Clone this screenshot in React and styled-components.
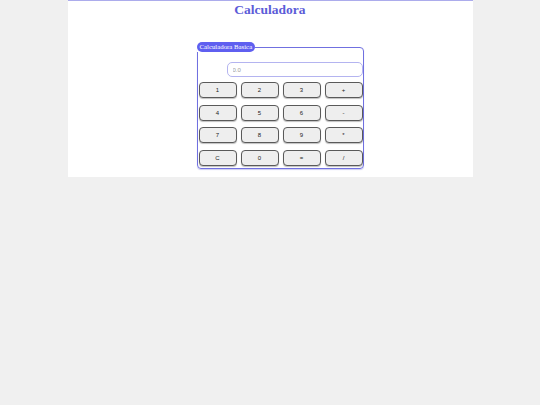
import styled, { createGlobalStyle } from "styled-components";

const GlobalStyle = createGlobalStyle`
  html, body {
    margin: 0;
    padding: 0;
    background: #f0f0f0;
  }
`;

const Container = styled.div`
  width: 75%;
  height: 177px;
  margin: 0 auto;
  background: white;
  border-top: 1px solid #acacec;
  box-sizing: border-box;
`;

const Title = styled.h1`
  margin: 0;
  padding-top: 1px;
  font-family: "Liberation Serif", serif;
  font-size: 13.5px;
  line-height: 15px;
  font-weight: bold;
  text-align: center;
  color: #5c5cd8;
`;

const Box = styled.fieldset`
  width: 163px;
  margin: 25px 0 0 129px;
  padding: 0 0 2px 1px;
  border: 1px solid #7070e0;
  border-radius: 4px;
  box-shadow: 0 1px 1px rgba(90, 90, 200, 0.3);
`;

const Legend = styled.legend`
  margin-left: -2px;
  padding: 0 3px;
  height: 10px;
  line-height: 10px;
  background: #5f5ff0;
  color: white;
  border-radius: 5px;
  font-family: "Liberation Serif", serif;
  font-size: 6.8px;
`;

const Display = styled.input`
  display: block;
  box-sizing: border-box;
  width: 136px;
  height: 15px;
  margin: 10px 0 5px 28px;
  padding: 0 5px;
  border: 1px solid #b4b4f0;
  border-radius: 5px;
  font-family: "Liberation Sans", sans-serif;
  font-size: 6px;
  outline: none;

  &::placeholder {
    color: #999;
  }
`;

const Keys = styled.div`
  display: grid;
  grid-template-columns: repeat(4, 38px);
  grid-auto-rows: 16px;
  column-gap: 4px;
  row-gap: 6.7px;
`;

const Key = styled.button`
  box-sizing: border-box;
  padding: 0;
  border: 1px solid #5a5a5a;
  border-radius: 4px;
  background: #eeeeee;
  box-shadow: 0 1px 1px rgba(0, 0, 0, 0.25);
  font-family: "Liberation Sans", sans-serif;
  font-size: 6px;
  color: #222;
  cursor: pointer;
`;

const keys = ["1", "2", "3", "+", "4", "5", "6", "-", "7", "8", "9", "*", "C", "0", "=", "/"];

const App = () => {
  return (
    <>
      <GlobalStyle />
      <Container>
        <Title>Calculadora</Title>
        <Box>
          <Legend>Calculadora Basica</Legend>
          <Display placeholder="0.0" readOnly />
          <Keys>
            {keys.map((k) => (
              <Key key={k} type="button">{k}</Key>
            ))}
          </Keys>
        </Box>
      </Container>
    </>
  );
};

export default App;
